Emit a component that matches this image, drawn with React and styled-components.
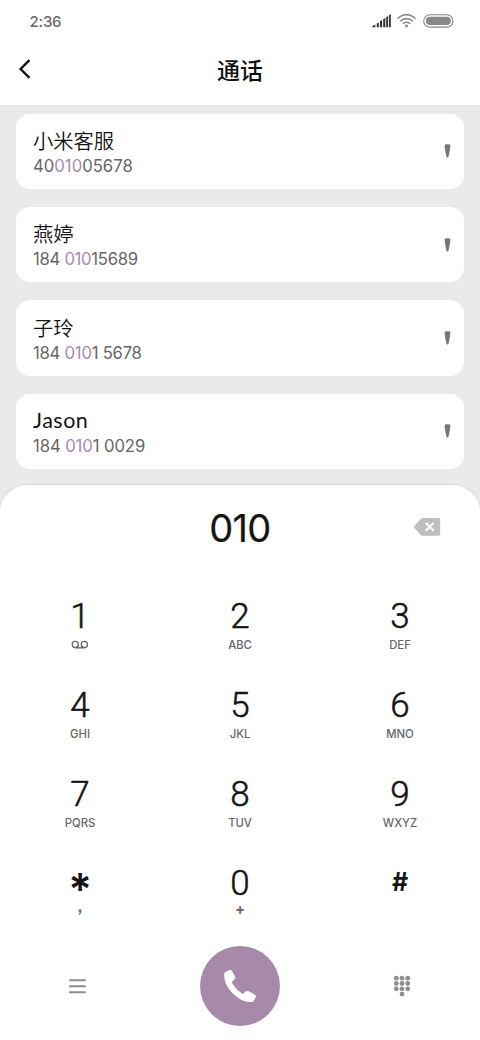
import React from "react";
import styled, { createGlobalStyle } from "styled-components";

const GlobalStyle = createGlobalStyle`
  * { box-sizing: border-box; }
  body { margin: 0; background: #fff; }
  button { border: 0; padding: 0; background: none; font: inherit; color: inherit; }
  svg { display: block; }
`;

const Screen = styled.div`
  width: 480px;
  height: 1040px;
  display: flex;
  flex-direction: column;
  background: #eaeaea;
  overflow: hidden;
  font-family: Inter, "Noto Sans CJK SC", sans-serif;
  color: #151515;
`;

const TopArea = styled.header`
  height: 104.5px;
  flex: none;
  background: #fff;
  box-shadow: 0 1px 1px #e6e6e6;
`;

const StatusBar = styled.div`
  display: flex;
  align-items: center;
  justify-content: space-between;
  height: 42px;
  padding: 0 26px 0 29.5px;
`;

const Clock = styled.span`
  font-size: 15px;
  font-weight: 500;
  line-height: 20px;
  letter-spacing: -0.2px;
  padding-top: 1px;
  color: #6a6a6a;
`;

const StatusIcons = styled.div`
  display: flex;
  align-items: center;
  gap: 6px;

  svg:last-child { margin-left: 1px; }
`;

const TitleBar = styled.div`
  display: grid;
  grid-template-columns: 80px 1fr 80px;
  align-items: center;
  height: 53px;
`;

const BackButton = styled.button`
  padding-left: 18px;
`;

const Title = styled.h1`
  margin: 0;
  text-align: center;
  font: 500 23px/34px "Noto Sans CJK SC", sans-serif;
  color: #111;
`;

const ContactList = styled.main`
  display: flex;
  flex-direction: column;
  gap: 18px;
  padding: 9px 16px 0;
  height: 380.5px;
  flex: none;
`;

const ContactCard = styled.article`
  display: flex;
  align-items: center;
  justify-content: space-between;
  height: 75.4px;
  padding: 0 13px 0 17px;
  border-radius: 14px;
  background: #fff;
`;

const ContactText = styled.div`
  padding-top: 2.2px;
`;

const ContactName = styled.div`
  font-family: ${(p) => (p.$latin ? "Lato, sans-serif" : '"Noto Sans CJK SC", sans-serif')};
  font-weight: ${(p) => (p.$latin ? 400 : 350)};
  font-size: ${(p) => (p.$latin ? "21.5px" : "20.3px")};
  line-height: 27px;
  letter-spacing: ${(p) => (p.$latin ? "0.5px" : "0")};
`;

const ContactNumber = styled.div`
  font-size: 16.7px;
  line-height: 24px;
  letter-spacing: ${(p) => p.$spacing}px;
  color: #666;
  white-space: pre;
`;

const Match = styled.span`
  color: #a78aaa;
`;

const Dialer = styled.section`
  flex: 1;
  border-radius: 27px 27px 0 0;
  background: #fff;
  box-shadow: 0 -1px 2px rgba(0, 0, 0, 0.08);
`;

const DialDisplay = styled.div`
  display: grid;
  grid-template-columns: 80px 1fr 80px;
  align-items: center;
  height: 87px;
  padding-bottom: 3px;
`;

const DialValue = styled.output`
  text-align: center;
  padding-top: 2px;
  font-size: 38px;
  font-weight: 400;
  line-height: 48px;
  letter-spacing: -0.7px;
  -webkit-text-stroke: 0.2px #151515;
`;

const DeleteButton = styled.button`
  padding-left: 14px;
`;

const Keypad = styled.div`
  display: grid;
  grid-template-columns: repeat(3, 160px);
  grid-auto-rows: 89px;
`;

const Key = styled.button`
  display: flex;
  flex-direction: column;
  align-items: center;
  padding-top: 24px;
`;

const Digit = styled.span`
  height: 42px;
  font: 300 35px/41px Roboto, sans-serif;
  -webkit-text-stroke: 0.5px #151515;
`;

const Symbol = styled.span`
  height: 42px;
  font: ${(p) => p.$weight} ${(p) => p.$size}px / ${(p) => p.$line}px Inter, sans-serif;
`;

const Letters = styled.span`
  height: 14px;
  font: ${(p) => p.$weight || 450} ${(p) => p.$size || 11.3}px / ${(p) => p.$line || 14}px ${(p) => p.$family || "Inter"}, sans-serif;
  color: #666;
`;

const VoicemailSlot = styled.span`
  margin-top: 2px;
`;

const ActionBar = styled.nav`
  display: grid;
  grid-template-columns: repeat(3, 160px);
  align-items: center;
  height: 112px;
  padding-top: 4px;
`;

const ActionButton = styled.button`
  justify-self: center;
  transform: translateX(${(p) => p.$shift || 0}px);
`;

const CallButton = styled.button`
  justify-self: center;
  display: grid;
  place-items: center;
  width: 80px;
  height: 80px;
  border-radius: 50%;
  background: #a78aaa;
`;

const SignalIcon = () => (
  <svg width="19" height="14" viewBox="0 0 19 14" fill="#333">
    <path d="M0.2 13.3V12.3L3.3 10.5V13.3ZM4.8 9.4l2.1-.8v4.7h-2.1ZM8 7l2.1-1v7.3H8ZM11.2 4.9l2.1-1v9.4h-2.1ZM14.2 3l1.9-1v11.3h-1.9ZM17 1l1.8-.8v13.1H17Z" />
  </svg>
);

const WifiIcon = () => (
  <svg width="19" height="14" viewBox="0 0 19 14" fill="none" stroke="#888" strokeWidth="1.6">
    <path d="M0.6 4.6C5.7-.5 13.3-.5 18.4 4.6M3.2 7.3c3.6-3.6 9-3.6 12.6 0M5.8 9.9c2.1-2.2 5.3-2.2 7.4 0" />
    <circle cx="9.5" cy="12.1" r="1.5" fill="#888" stroke="none" />
  </svg>
);

const BatteryIcon = () => (
  <svg width="31" height="14" viewBox="0 0 31 14">
    <rect x="0.7" y="0.7" width="29.3" height="12.4" rx="6.2" fill="none" stroke="#888" strokeWidth="1.1" />
    <rect x="2.8" y="2.8" width="25" height="8.2" rx="4.1" fill="#888" />
  </svg>
);

const BackIcon = () => (
  <svg width="14" height="20" viewBox="0 0 14 20" fill="none" stroke="#151515" strokeWidth="2.4">
    <path d="M11.5 1.1 2.6 10l8.9 8.9" />
  </svg>
);

const MarkerIcon = () => (
  <svg width="7" height="14" viewBox="0 0 7 14" fill="#777">
    <path d="M.6 1.7C.5.6 1.5.2 3.5.2s3 .4 2.9 1.5C6.2 5 5.3 9.5 4.5 12.8c-.2 1.1-1.8 1.1-2 0C1.7 9.5.8 5 .6 1.7Z" />
  </svg>
);

const DeleteIcon = () => (
  <svg width="27" height="20" viewBox="0 0 27 20">
    <path d="M8.7.9h15.6q1.9 0 1.9 1.9v14.1q0 1.9-1.9 1.9H8.7q-1.2 0-2-.9L.7 11.2q-1.1-1.3 0-2.6l6-6.8q.8-.9 2-.9Z" fill="#bebebe" />
    <path d="m11.7 5.8 8 8m0-8-8 8" stroke="#fff" strokeWidth="2" />
  </svg>
);

const VoicemailIcon = () => (
  <svg width="18" height="9" viewBox="0 0 18 9" fill="none" stroke="#666" strokeWidth="1.25">
    <path d="M4.5 7.9h9M5.9 6.2l1.4 1.7M11.5 6.2 10 7.9" />
    <circle cx="4.3" cy="4.4" r="3.1" />
    <circle cx="13.4" cy="4.4" r="3.1" />
  </svg>
);

const MenuIcon = () => (
  <svg width="18" height="16" viewBox="0 0 18 16" stroke="#8e8e8e" strokeWidth="2.1" strokeLinecap="round">
    <path d="M1.4 2.3h15M1.4 8.3h15M1.4 14.3h15" />
  </svg>
);

const PhoneIcon = () => (
  <svg width="34" height="34" viewBox="0 0 34 34" fill="#fff">
    <path d="M2.4 3.1 6.4 1.1Q8.1.4 9 1.9L12.2 7.7Q12.8 9.1 11.8 10.1L8.8 13.1C10.8 17.6 15.2 22.4 19.9 25L23 22.2Q24 21.3 25.2 22L32 25.8Q33.4 26.7 32.6 28.2L30.6 31.9Q30 33 28.8 33.1C16.4 33.7.6 19.5 1.2 5.1Q1.3 3.7 2.4 3.1Z" />
  </svg>
);

const DotsIcon = () => (
  <svg width="18" height="22" viewBox="0 0 18 22" fill="#8e8e8e">
    {[3.2, 8.5, 13.8].map((y) =>
      [3.3, 9, 14.7].map((x) => <circle key={`${x}-${y}`} cx={x} cy={y} r="2.4" />)
    )}
    <circle cx="9" cy="19.1" r="2.4" />
  </svg>
);

const contacts = [
  { name: "小米客服", number: ["40", "010", "05678"], spacing: 0 },
  { name: "燕婷", number: ["184 ", "010", "15689"], spacing: -0.3 },
  { name: "子玲", number: ["184 ", "010", "1 5678"], spacing: -0.25 },
  { name: "Jason", latin: true, number: ["184 ", "010", "1 0029"], spacing: -0.1 },
];

const keys = [
  ["1", null], ["2", "ABC"], ["3", "DEF"],
  ["4", "GHI"], ["5", "JKL"], ["6", "MNO"],
  ["7", "PQRS"], ["8", "TUV"], ["9", "WXYZ"],
];

export default function App() {
  return (
    <Screen>
      <GlobalStyle />
      <TopArea>
        <StatusBar>
          <Clock>2:36</Clock>
          <StatusIcons>
            <SignalIcon />
            <WifiIcon />
            <BatteryIcon />
          </StatusIcons>
        </StatusBar>
        <TitleBar>
          <BackButton aria-label="返回"><BackIcon /></BackButton>
          <Title>通话</Title>
        </TitleBar>
      </TopArea>
      <ContactList>
        {contacts.map(({ name, latin, number: [before, match, after], spacing }) => (
          <ContactCard key={name}>
            <ContactText>
              <ContactName $latin={latin}>{name}</ContactName>
              <ContactNumber $spacing={spacing}>
                {before}<Match>{match}</Match>{after}
              </ContactNumber>
            </ContactText>
            <MarkerIcon />
          </ContactCard>
        ))}
      </ContactList>
      <Dialer>
        <DialDisplay>
          <span />
          <DialValue>010</DialValue>
          <DeleteButton aria-label="删除"><DeleteIcon /></DeleteButton>
        </DialDisplay>
        <Keypad>
          {keys.map(([digit, letters]) => (
            <Key key={digit}>
              <Digit>{digit}</Digit>
              {letters ? <Letters>{letters}</Letters> : <VoicemailSlot><VoicemailIcon /></VoicemailSlot>}
            </Key>
          ))}
          <Key>
            <Symbol $weight={600} $size={44} $line={52}>*</Symbol>
            <Letters $size={19} $weight={700} $line={0.01} $family="Lato">,</Letters>
          </Key>
          <Key>
            <Digit>0</Digit>
            <Letters $size={15} $weight={700} $line={7}>+</Letters>
          </Key>
          <Key>
            <Symbol $weight={700} $size={25} $line={38}>#</Symbol>
          </Key>
        </Keypad>
        <ActionBar>
          <ActionButton aria-label="菜单" $shift={-2.5}><MenuIcon /></ActionButton>
          <CallButton aria-label="呼叫"><PhoneIcon /></CallButton>
          <ActionButton aria-label="键盘" $shift={2}><DotsIcon /></ActionButton>
        </ActionBar>
      </Dialer>
    </Screen>
  );
}
